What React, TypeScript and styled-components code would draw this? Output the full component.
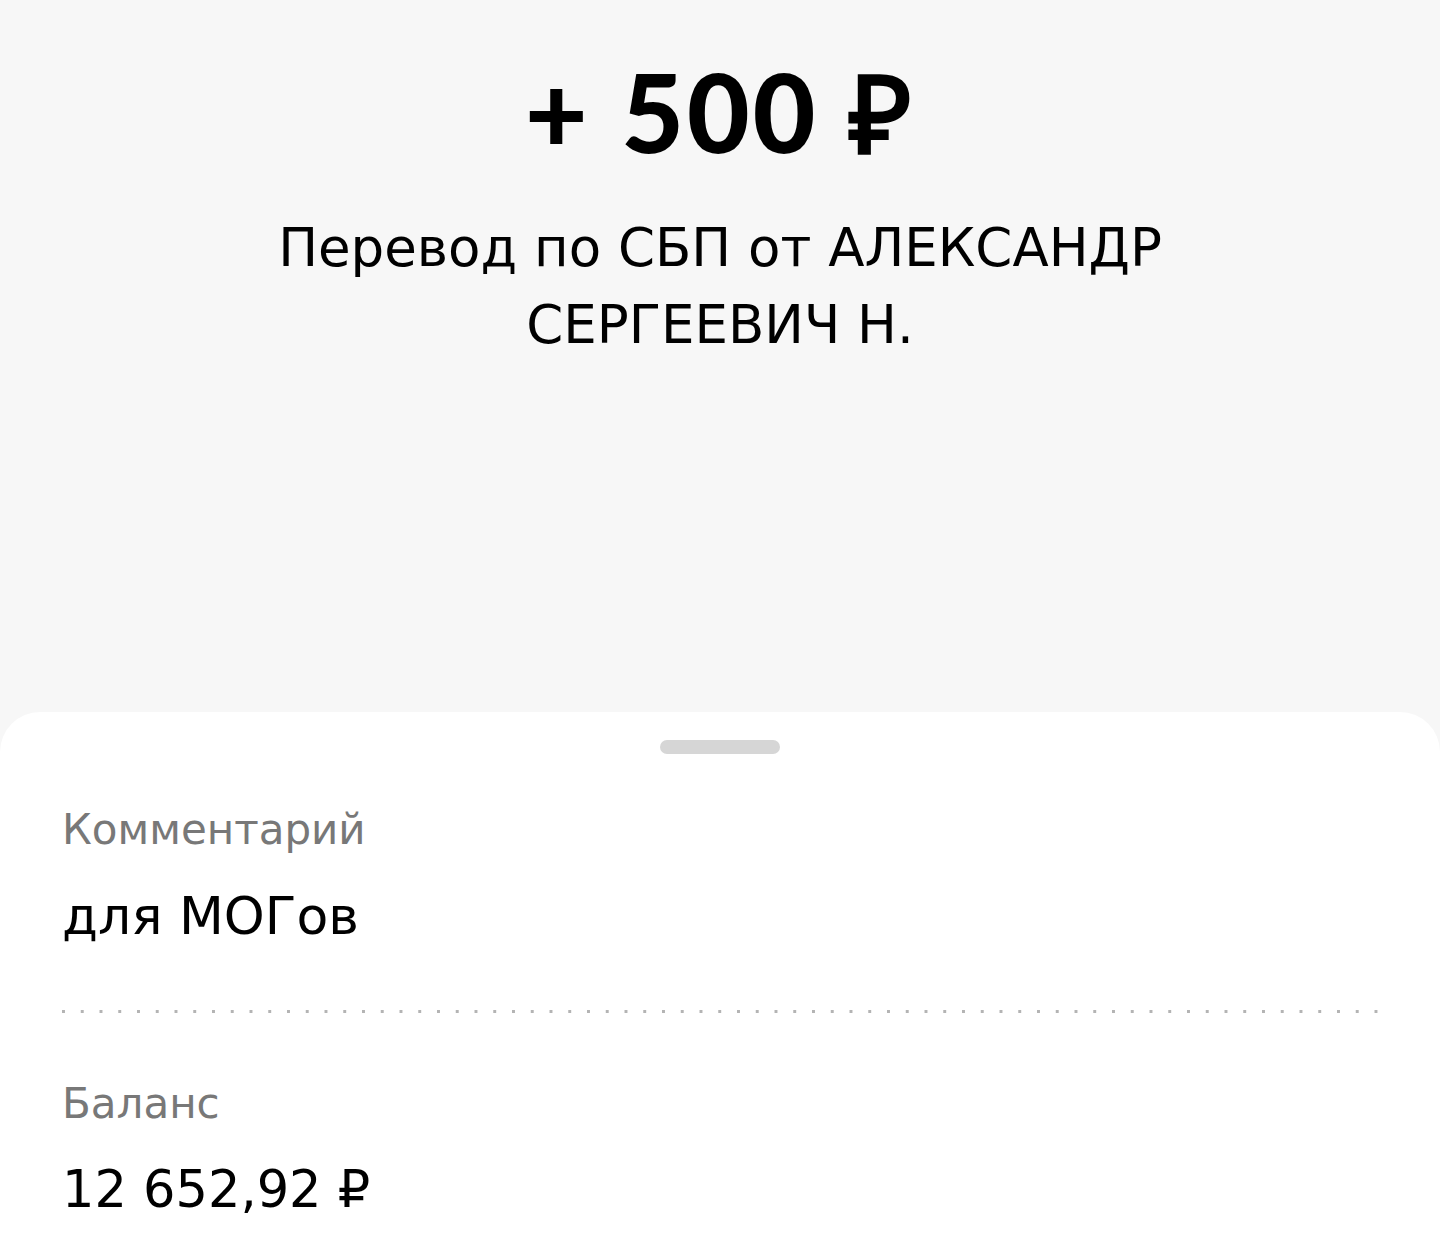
import React from 'react';
import styled, { createGlobalStyle } from 'styled-components';

const GlobalStyle = createGlobalStyle`
  html, body {
    margin: 0;
    padding: 0;
    background: #f7f7f7;
  }
  body {
    font-family: "DejaVu Sans", "Noto Sans", sans-serif;
    color: #000;
  }
`;

const Screen = styled.div`
  width: 1440px;
  height: 1258px;
  display: flex;
  flex-direction: column;
  background: #f7f7f7;
  overflow: hidden;
`;

const Header = styled.header`
  height: 712px;
  flex-shrink: 0;
  display: flex;
  flex-direction: column;
  align-items: center;
  padding-top: 41px;
  box-sizing: border-box;
`;

const Amount = styled.h1`
  margin: 0;
  font-family: Lato, "Open Sans", sans-serif;
  font-size: 108px;
  font-weight: 900;
  line-height: 140px;
  letter-spacing: 3px;
  word-spacing: 2px;
`;

const Subtitle = styled.p`
  margin: 28px 0 0;
  width: 960px;
  text-align: center;
  font-size: 53px;
  line-height: 77px;
  font-weight: 400;
`;

const Sheet = styled.section`
  flex: 1;
  background: #fff;
  border-radius: 40px 40px 0 0;
  display: flex;
  flex-direction: column;
  padding: 28px 62px 0;
`;

const Handle = styled.div`
  align-self: center;
  width: 120px;
  height: 14px;
  border-radius: 7px;
  background: #d6d6d6;
`;

const Field = styled.div<{ $top: number }>`
  display: flex;
  flex-direction: column;
  padding-top: ${p => p.$top}px;
`;

const Label = styled.span`
  font-size: 42px;
  line-height: 60px;
  color: #787878;
`;

const Value = styled.span<{ $size: number }>`
  margin-top: 24px;
  font-size: ${p => p.$size}px;
  line-height: 64px;
  color: #000;
`;

// dotted separator between the fields
const Divider = styled.div`
  margin-top: 62px;
  height: 3px;
  background-image: linear-gradient(90deg, #b4b4b4 3px, transparent 3px);
  background-size: 18.75px 3px;
  background-repeat: repeat-x;
`;

export default function App() {
  return (
    <Screen>
      <GlobalStyle />
      <Header>
        <Amount>+ 500 ₽</Amount>
        <Subtitle>Перевод по СБП от АЛЕКСАНДР СЕРГЕЕВИЧ Н.</Subtitle>
      </Header>
      <Sheet>
        <Handle />
        <Field $top={46}>
          <Label>Комментарий</Label>
          <Value $size={52}>для МОГов</Value>
        </Field>
        <Divider />
        <Field $top={61}>
          <Label>Баланс</Label>
          <Value $size={51}>12 652,92 ₽</Value>
        </Field>
      </Sheet>
    </Screen>
  );
}
